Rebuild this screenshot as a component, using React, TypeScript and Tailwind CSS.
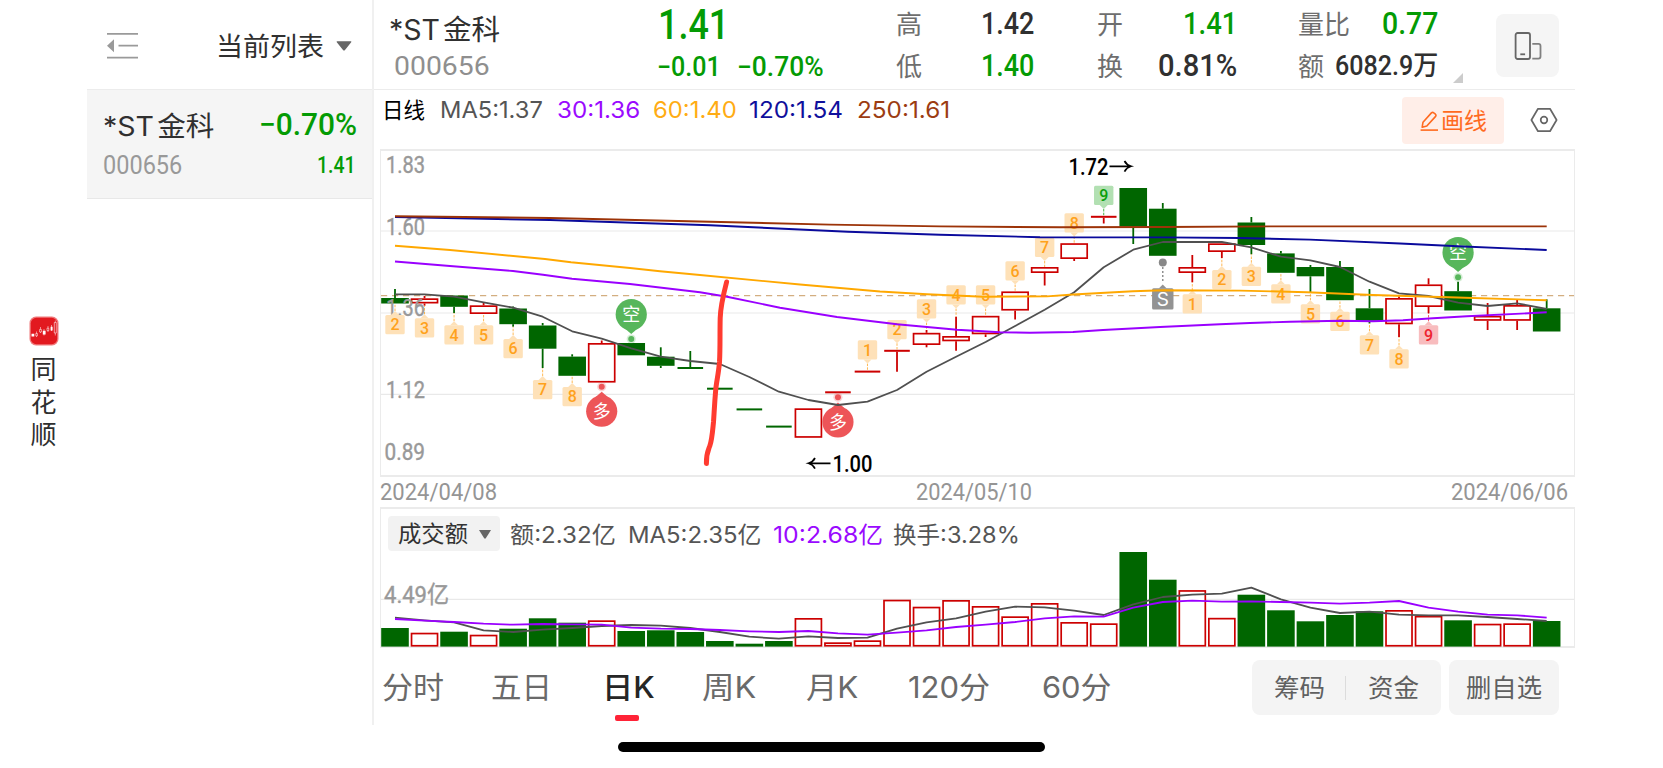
import { useLayoutEffect, useRef, useState } from "react";
import type { ReactNode } from "react";

type Point = [number, number];

const NUM = "font-['Roboto','Noto_Sans_CJK_SC',sans-serif]";
const UI = "font-['Inter','Noto_Sans_CJK_SC',sans-serif]";

/* Text condensed or widened to fill the width given by its class. */
function Fit({ className, children }: { className: string; children: ReactNode }) {
  const box = useRef<HTMLSpanElement>(null);
  const inner = useRef<HTMLSpanElement>(null);
  const [scale, setScale] = useState(1);
  useLayoutEffect(() => {
    if (box.current && inner.current && inner.current.offsetWidth > 0) {
      setScale(box.current.clientWidth / inner.current.offsetWidth);
    }
  }, []);
  return (
    <span ref={box} className={`block shrink-0 whitespace-nowrap ${className}`}>
      <span ref={inner} className="inline-block origin-left" style={{ transform: `scaleX(${scale})` }}>
        {children}
      </span>
    </span>
  );
}

const X0 = 395;
const PITCH = 29.53;
const xAt = (i: number) => X0 + i * PITCH;

// colour, body top, body bottom, wick top, wick bottom
type Candle = ["g" | "r", number, number, number, number];
const candles: Candle[] = [
  ["g", 298, 303.5, 289, 303.5],
  ["r", 298.3, 303.5, 296, 305.7],
  ["g", 295.5, 306.8, 295.5, 313],
  ["r", 305.3, 314, 302.5, 314],
  ["g", 308.5, 324.2, 306.5, 326.7],
  ["g", 325.5, 348.7, 323, 368],
  ["g", 356.6, 375.8, 354.3, 375.8],
  ["r", 343, 382.6, 340.5, 382],
  ["g", 343, 355.3, 343, 355],
  ["g", 356.7, 365.8, 347.3, 368],
  ["g", 367, 369, 351, 368],
  ["g", 387.7, 389.7, 388, 389],
  ["g", 408.4, 410.4, 409, 410],
  ["g", 425.6, 427.6, 426, 427],
  ["r", 408.3, 437.8, 409, 437],
  ["r", 391.3, 393.3, 392, 393],
  ["r", 370.6, 372.6, 371, 372],
  ["r", 349.8, 351.8, 351, 371.7],
  ["r", 332.8, 345, 330, 347.3],
  ["r", 336, 341.3, 316.7, 350.7],
  ["r", 315.8, 334.3, 316.5, 337],
  ["r", 291.4, 310.6, 292, 319.5],
  ["r", 267, 273, 268, 285.5],
  ["r", 243.2, 259, 244, 261],
  ["r", 215.8, 217.8, 216, 223.5],
  ["g", 188, 226.5, 188, 244],
  ["g", 208.7, 255.8, 203, 255],
  ["r", 267, 273, 255, 282.3],
  ["r", 243.3, 252, 244, 258],
  ["g", 222.5, 245, 217, 254.3],
  ["g", 253.4, 272.8, 251, 272],
  ["g", 267, 276.3, 265, 292],
  ["g", 267, 300.2, 261, 300],
  ["g", 308.3, 320.8, 289, 323.5],
  ["r", 298, 324.3, 296.5, 337],
  ["r", 284.4, 307, 278.3, 313.3],
  ["g", 291.2, 310.5, 281.7, 310],
  ["r", 315.8, 320.8, 303, 330],
  ["r", 305, 320.8, 300, 330],
  ["g", 308.3, 331.5, 299.3, 331],
];

const volumeTops = [
  628, 632.7, 631.7, 634.7, 628.7, 618.3, 622.7, 620.3, 631, 630.3, 632, 641, 643.7, 641, 618, 642.3, 640.3, 599.7,
  606.7, 600, 606, 616.3, 603, 622, 623.3, 552, 579.7, 590.1, 617.8, 594.7, 610.3, 621.3, 615, 611.3, 610, 615.8,
  620.3, 623.7, 623.3, 621,
];
const volumeMa5 = [
  617.7, 620.3, 622.3, 630.3, 632, 629.7, 628, 626, 625, 625.7, 628, 632, 636.7, 638.7, 636.3, 638, 637.7, 628.7,
  622.3, 618.3, 611.7, 606.7, 607.3, 610.7, 615, 604.3, 597, 594.7, 593.7, 587.7, 599.3, 607.7, 613, 611.7, 614.7,
  615.3, 615.3, 617, 619, 621,
];
const volumeMa10 = [
  619, 620.7, 622, 623.7, 624.7, 624, 624.3, 624.7, 627.7, 628.7, 629, 630, 631.3, 632, 631, 633.3, 634.7, 632.7,
  630.3, 627, 624.7, 622, 618.3, 616.3, 616.7, 607.7, 602, 600.7, 601.7, 601.3, 602, 602.7, 603.7, 602.7, 601, 607.7,
  611.7, 614.7, 615.3, 617.7,
];
const ma5 = [
  294.3, 294.3, 296.7, 302.3, 307.7, 316.7, 331.3, 338.7, 348.3, 356.7, 361, 364, 377, 391.7, 400, 405, 401.7, 390,
  371.7, 356.7, 342, 326, 309.7, 292.3, 267.3, 249.7, 242, 242, 242, 247.3, 256.7, 260.3, 267, 281.7, 293.3, 296,
  302.7, 306, 303.3, 309,
];
const ma30: Point[] = [
  [395, 261.5], [453, 266.2], [513, 271], [543, 274.7], [572, 278.7], [630, 284], [700, 292.3], [727, 296.7],
  [780, 307.7], [837, 317], [897, 324.3], [957, 329.7], [1000, 332.3], [1030, 332.7], [1073, 332], [1103, 330],
  [1160, 327], [1220, 324.3], [1250, 323], [1290, 321.7], [1340, 320.7], [1373, 321.2], [1403, 320.3],
  [1433, 318.3], [1467, 316.3], [1546.7, 312.3],
];
const ma60: Point[] = [
  [395, 245.8], [450, 250], [545, 259], [571, 262.3], [630, 268], [660, 271.2], [700, 275], [800, 284.5],
  [880, 291.5], [927, 294.3], [983, 296.7], [1047, 296.4], [1073, 294.5], [1133, 291.2], [1163, 290.2],
  [1240, 290.6], [1307, 292.2], [1373, 295], [1457, 297.5], [1546.7, 300.3],
];
const ma120: Point[] = [
  [395, 217], [550, 220], [640, 223], [710, 225.3], [848, 231.7], [940, 234.8], [1040, 237.2], [1163, 237.4],
  [1240, 238], [1310, 239.6], [1400, 243.5], [1458, 246.2], [1546.7, 250],
];
const ma250: Point[] = [
  [395, 216.3], [550, 218], [710, 221.7], [830, 224.6], [940, 226.4], [1060, 227.3], [1163, 227], [1270, 226.4],
  [1546.7, 226.4],
];

// candle index, digit, top of the box, side of the pointer, tone
type Badge = [number, string, number, "up" | "down", "o" | "g" | "r"];
const badges: Badge[] = [
  [0, "2", 315, "up", "o"], [1, "3", 318.3, "up", "o"], [2, "4", 325.2, "up", "o"], [3, "5", 325.2, "up", "o"],
  [4, "6", 339, "up", "o"], [5, "7", 380, "up", "o"], [6, "8", 387, "up", "o"],
  [16, "1", 340.3, "down", "o"], [17, "2", 320, "down", "o"], [18, "3", 299.3, "down", "o"],
  [19, "4", 285.3, "down", "o"], [20, "5", 285.3, "down", "o"], [21, "6", 261.3, "down", "o"],
  [22, "7", 237.7, "down", "o"], [23, "8", 213.2, "down", "o"], [24, "9", 185.7, "down", "g"],
  [27, "1", 294.3, "up", "o"], [28, "2", 270, "up", "o"], [29, "3", 266.7, "up", "o"], [30, "4", 284.3, "up", "o"],
  [31, "5", 304.3, "up", "o"], [32, "6", 311.7, "up", "o"], [33, "7", 335.3, "up", "o"], [34, "8", 349.3, "up", "o"],
  [35, "9", 325.3, "up", "r"],
];
const badgeFill = { o: "#fee1b8", g: "#b2e0b2", r: "#f8bcbe" };
const badgeText = { o: "#ffa21c", g: "#0a9f0a", r: "#ee2530" };

const toLine = (pts: Point[]) => pts.map((p) => p.join(",")).join(" ");
const series = (ys: number[]) => toLine(ys.map((y, i): Point => [xAt(i), y]));

function Bars() {
  return (
    <g>
      {candles.map(([tone, top, bottom, high, low], i) => {
        const x = xAt(i);
        const color = tone === "g" ? "#006600" : "#cc0000";
        const flat = bottom - top < 2.5;
        return (
          <g key={i}>
            {high < top && <line x1={x} x2={x} y1={high} y2={top} stroke={color} strokeWidth="1.8" />}
            {low > bottom && <line x1={x} x2={x} y1={bottom} y2={low} stroke={color} strokeWidth="1.8" />}
            {flat && <rect x={x - 12.8} y={top} width="25.6" height="2" fill={color} />}
            {!flat && tone === "g" && <rect x={x - 13.8} y={top} width="27.6" height={bottom - top} fill={color} />}
            {!flat && tone === "r" && (
              <rect x={x - 13} y={top + 0.85} width="26" height={bottom - top - 1.7} fill="#fff" stroke={color} strokeWidth="1.7" />
            )}
          </g>
        );
      })}
    </g>
  );
}

function BadgeMark({ badge }: { badge: Badge }) {
  const [i, digit, top, side, tone] = badge;
  const x = xAt(i);
  const c = candles[i];
  const tip = side === "up" ? top - 4 : top + 23.3;
  const base = side === "up" ? top : top + 19.3;
  const end = side === "up" ? Math.max(c[2], c[4]) : Math.min(c[1], c[3]);
  return (
    <g>
      <line x1={x} x2={x} y1={tip} y2={end} stroke={badgeText[tone]} strokeWidth="1" strokeDasharray="2.5 1.2" opacity="0.75" />
      <rect x={x - 9.7} y={top} width="19.4" height="19.3" rx="1.5" fill={badgeFill[tone]} />
      <path d={`M${x - 4} ${base}L${x} ${tip}L${x + 4} ${base}Z`} fill={badgeFill[tone]} />
      <text x={x} y={top + 15.4} textAnchor="middle" fontSize="16" fontWeight="500" fontFamily="Roboto, sans-serif" fill={badgeText[tone]}>
        {digit}
      </text>
    </g>
  );
}

function Pin({ i, cy, dot, label, color }: { i: number; cy: number; dot: number; label: string; color: string }) {
  const x = xAt(i);
  const dir = dot > cy ? 1 : -1;
  return (
    <g>
      <circle cx={x} cy={dot} r="4.6" fill={color} opacity="0.25" />
      <circle cx={x} cy={dot} r="3" fill={color} />
      <path d={`M${x - 7} ${cy + dir * 13.5}L${x} ${cy + dir * 19.5}L${x + 7} ${cy + dir * 13.5}Z`} fill={color} />
      <circle cx={x} cy={cy} r="15.6" fill={color} />
      <text x={x} y={cy + 6.6} textAnchor="middle" fontSize="18" fill="#fff" fontFamily="'Noto Sans CJK SC', sans-serif">
        {label}
      </text>
    </g>
  );
}

function AxisLabel({ x, y, w, children }: { x: number; y: number; w: number; children: string }) {
  return (
    <text
      x={x}
      y={y}
      textLength={w}
      lengthAdjust="spacingAndGlyphs"
      fontSize="23.5"
      fill="#999"
      stroke="#999"
      strokeWidth="0.4"
      fontFamily="Roboto, 'Noto Sans CJK SC', sans-serif"
    >
      {children}
    </text>
  );
}

function PriceChart() {
  return (
    <svg viewBox="381 151 1193 324" className="block h-[324px] w-[1193px] overflow-visible">
      <g stroke="#e9e9e9" strokeWidth="1.2">
        <line x1="381" x2="1574" y1="231" y2="231" />
        <line x1="381" x2="1574" y1="313" y2="313" />
        <line x1="381" x2="1574" y1="394.4" y2="394.4" />
      </g>
      <line x1="381" x2="1574" y1="295.6" y2="295.6" stroke="#d3ae80" strokeWidth="1.4" strokeDasharray="6.2 4.8" />
      <Bars />
      <AxisLabel x={386} y={173} w={39}>1.83</AxisLabel>
      <AxisLabel x={386} y={234.7} w={39}>1.60</AxisLabel>
      <AxisLabel x={386} y={316.3} w={39}>1.36</AxisLabel>
      <AxisLabel x={386} y={398} w={39}>1.12</AxisLabel>
      <AxisLabel x={384.5} y={460} w={40.5}>0.89</AxisLabel>
      {badges.map((b) => (
        <BadgeMark key={b[0]} badge={b} />
      ))}
      <Pin i={8} cy={314.6} dot={339} label="空" color="#57b65b" />
      <Pin i={36} cy={252.6} dot={277.2} label="空" color="#57b65b" />
      <Pin i={7} cy={411.2} dot={386.8} label="多" color="#ed5558" />
      <Pin i={15} cy={422} dot={397.2} label="多" color="#ed5558" />
      <g>
        <circle cx={xAt(26)} cy="262.6" r="4" fill="#888" />
        <line x1={xAt(26)} x2={xAt(26)} y1="267" y2="283" stroke="#888" strokeWidth="1.4" strokeDasharray="2 2" />
        <rect x={xAt(26) - 10.7} y="288.3" width="21.4" height="21.2" rx="1.5" fill="#939393" />
        <path d={`M${xAt(26) - 4} 288.5L${xAt(26)} 284.5L${xAt(26) + 4} 288.5Z`} fill="#939393" />
        <text x={xAt(26)} y="306" textAnchor="middle" fontSize="19" fill="#fff" fontFamily="Inter, sans-serif">
          S
        </text>
      </g>
      <g fill="none" strokeWidth="1.9" strokeLinejoin="round">
        <polyline points={series(ma5)} stroke="#505050" strokeWidth="1.8" />
        <polyline points={toLine(ma30)} stroke="#9a00ff" />
        <polyline points={toLine(ma60)} stroke="#ffa800" />
        <polyline points={toLine(ma120)} stroke="#0a0a9c" />
        <polyline points={toLine(ma250)} stroke="#9c3308" />
      </g>
      <g fontFamily="Roboto, sans-serif" fontSize="23.5" fontWeight="500" fill="#000">
        <text x="1068.5" y="175" textLength="40" lengthAdjust="spacingAndGlyphs">1.72</text>
        <text x="832.5" y="471.7" textLength="40" lengthAdjust="spacingAndGlyphs">1.00</text>
      </g>
      <g fill="none" stroke="#000" strokeWidth="1.7">
        <path d="M1109.5 166.3H1130.5M1124.5 161Q1126.5 165 1131 166.3Q1126.5 167.6 1124.5 171.6" />
        <path d="M830.5 463.3H809.5M815 458Q813 462 808.5 463.3Q813 464.6 815 468.6" />
      </g>
      <path
        d="M726.6 282C723 296 720.5 306 720.2 318C719.8 334 720.3 348 719.5 362C718.5 374 716.4 382 715.7 390C714.5 404 714.2 412 713.5 422C712.5 432 712 440 709.8 446C707.5 452 706.2 454 706.4 463.5"
        fill="none"
        stroke="#ff3b30"
        strokeWidth="5"
        strokeLinecap="round"
        strokeLinejoin="round"
      />
    </svg>
  );
}

function VolumeChart() {
  return (
    <svg viewBox="381 552 1193 93" className="block h-[93px] w-[1193px] overflow-visible">
      <line x1="381" x2="1574" y1="599.4" y2="599.4" stroke="#e9e9e9" strokeWidth="1.2" />
      <AxisLabel x={384} y={603} w={65}>4.49亿</AxisLabel>
      {volumeTops.map((top, i) =>
        candles[i][0] === "g" ? (
          <rect key={i} x={xAt(i) - 13.8} y={top} width="27.6" height={646.6 - top} fill="#006600" />
        ) : (
          <rect key={i} x={xAt(i) - 13} y={top + 0.85} width="26" height={644.9 - top} fill="#fff" stroke="#cc0000" strokeWidth="1.7" />
        ),
      )}
      <g fill="none" strokeWidth="1.8" strokeLinejoin="round">
        <polyline points={series(volumeMa5)} stroke="#505050" />
        <polyline points={series(volumeMa10)} stroke="#9a00ff" />
      </g>
    </svg>
  );
}

function AppLogo() {
  return (
    <svg viewBox="0 0 30 30" className="block size-[30px]">
      <rect x="0.5" y="0.5" width="29" height="29" rx="6.5" fill="#f07a7c" />
      <rect x="1.8" y="1.8" width="26.4" height="26.4" rx="5.5" fill="#e2191f" />
      <path d="M7.5 15.5V21M11.5 11V17M15 13V19.5M19 10V16M22.5 9V15M26.3 4.5V19.5" stroke="#fff" strokeWidth="0.5" />
      <path d="M2.5 17.8h2.8v2.8h-2.8zM13.8 14.8h2.8v3.7h-2.8zM21.6 10.8h2v3.7h-2z" fill="#fff" />
      <path d="M6.8 17.5h1.6v2.4h-1.6zM10.6 13.4h1.8v2.6h-1.8zM18 12.2h1.8v2.4h-1.8zM25.3 6.5h2v10.5h-2z" fill="#e2191f" stroke="#fff" strokeWidth="0.55" />
    </svg>
  );
}

function Rail() {
  return (
    <div className="flex w-[87px] flex-col items-center pt-[316px]">
      <AppLogo />
      <div className={`${UI} mt-[8px] flex flex-col items-center text-[26px] leading-[32.7px] text-[#2f2f2f]`}>
        <span>同</span>
        <span>花</span>
        <span>顺</span>
      </div>
    </div>
  );
}

function StockName() {
  return (
    <>
      *ST<span className="ml-[3px]">金科</span>
    </>
  );
}

function Sidebar() {
  return (
    <aside className="h-[725px] w-[287px] border-r-2 border-[#f0f0f0]">
      <div className="flex h-[90px] items-center border-b border-[#ececec] pt-[2px] pl-5">
        <svg viewBox="0 0 31 28" className="block h-[28px] w-[31px]" fill="#9a9a9a">
          <path d="M0 1h31v1.8H0zM11.5 12.8H31v1.8H11.5zM0 24.8h31v1.8H0zM0 13.7L7 7.2v13z" />
        </svg>
        <Fit className={`${UI} mt-px ml-[78px] w-[108px] text-[26.5px] leading-[36px] text-[#303030]`}>当前列表</Fit>
        <svg viewBox="0 0 16 10" className="mt-px ml-[12px] block h-[10px] w-[16px]" fill="#666">
          <path d="M1.2 0.3h13.6q1 0 .4 1L9 9q-1 1-2 0L.8 1.3q-.6-1 .4-1z" />
        </svg>
      </div>
      <div className="h-[109px] border-b border-[#e8e8e8] bg-[#f5f5f5] pt-[17px] pr-[15px] pl-[16px]">
        <div className="flex h-[38px] justify-between">
          <Fit className={`${UI} mt-px w-[111px] text-[27px] leading-[38px] text-[#303030]`}>
            <StockName />
          </Fit>
          <Fit className={`${NUM} w-[98px] text-[30.5px] font-medium leading-[36px] text-[#049b04]`}>−0.70%</Fit>
        </div>
        <div className="mt-[3px] flex h-[34px] justify-between pr-px">
          <Fit className={`${NUM} w-[79px] text-[25px] leading-[35px] text-[#999]`}>000656</Fit>
          <Fit className={`${NUM} w-[39px] text-[24px] font-medium leading-[35px] text-[#049b04]`}>1.41</Fit>
        </div>
      </div>
    </aside>
  );
}

function Stat({ label, labelWidth, value, valueClass }: { label: string; labelWidth: string; value: string; valueClass: string }) {
  return (
    <div className="flex h-[42px] justify-between">
      <Fit className={`${UI} mt-[2px] text-[26px] leading-[42px] text-[#6e6e6e] ${labelWidth}`}>{label}</Fit>
      <Fit className={`${NUM} font-medium leading-[43px] ${valueClass}`}>{value}</Fit>
    </div>
  );
}

function QuoteHeader() {
  return (
    <header className="flex h-[90px] border-b border-[#ececec] pl-[15px]">
      <div className="w-[268px] pt-[12px]">
        <Fit className={`${UI} w-[111px] text-[28px] leading-[36px] text-[#303030]`}>
          <StockName />
        </Fit>
        <Fit className={`${NUM} mt-px ml-[5px] w-[96px] text-[26px] leading-[34px] text-[#8f8f8f]`}>000656</Fit>
      </div>
      <div className="w-[239px] text-[#049b04]">
        <Fit className={`${NUM} ml-px w-[71px] text-[42.5px] font-medium leading-[50px]`}>1.41</Fit>
        <div className="flex gap-[16px]">
          <Fit className={`${NUM} w-[64px] text-[27px] font-medium leading-[34px]`}>−0.01</Fit>
          <Fit className={`${NUM} w-[87px] text-[27px] font-medium leading-[34px]`}>−0.70%</Fit>
        </div>
      </div>
      <div className="w-[138px] pt-[2px]">
        <Stat label="高" labelWidth="w-[26px]" value="1.42" valueClass="w-[53px] text-[31px] text-[#303030]" />
        <Stat label="低" labelWidth="w-[26px]" value="1.40" valueClass="w-[53px] text-[31px] text-[#049b04]" />
      </div>
      <div className="ml-[63px] w-[140px] pt-[2px]">
        <Stat label="开" labelWidth="w-[26px]" value="1.41" valueClass="w-[54px] text-[31px] text-[#049b04]" />
        <Stat label="换" labelWidth="w-[26px]" value="0.81%" valueClass="w-[79px] text-[31px] text-[#303030]" />
      </div>
      <div className="ml-[61px] w-[140px] pt-[2px]">
        <Stat label="量比" labelWidth="w-[52px]" value="0.77" valueClass="w-[56px] text-[31px] text-[#049b04]" />
        <Stat label="额" labelWidth="w-[26px]" value="6082.9万" valueClass="w-[103px] text-[27.5px] text-[#303030]" />
      </div>
      <svg viewBox="0 0 10 10" className="mt-[73px] ml-[15px] block size-[10px]" fill="#ccc">
        <path d="M10 0V10H0z" />
      </svg>
      <div className="mt-[14px] ml-[33px] flex h-[63px] w-[63px] items-center justify-center rounded-[8px] bg-[#f5f5f5]">
        <svg viewBox="0 0 28 30" className="block h-[30px] w-[28px]" fill="none" stroke="#666" strokeWidth="1.8">
          <rect x="1.6" y="2" width="14.4" height="26" rx="2" />
          <path d="M6.3 23.3h4.8" />
          <path d="M18.3 12.9H24.5q2 0 2 2V25.6q0 2-2 2H18.3" stroke="#808080" />
        </svg>
      </div>
    </header>
  );
}

function AverageRow() {
  return (
    <div className="flex h-[59px] pl-[8px]">
      <Fit className={`${UI} mt-[6px] w-[43px] text-[22px] leading-[28px] text-black`}>日线</Fit>
      <Fit className={`${UI} mt-[6px] ml-[15px] w-[103px] text-[23px] leading-[29px] text-[#555]`}>MA5:1.37</Fit>
      <Fit className={`${UI} mt-[6px] ml-[14px] w-[83px] text-[23px] leading-[29px] text-[#9a0aff]`}>30:1.36</Fit>
      <Fit className={`${UI} mt-[6px] ml-[13px] w-[84px] text-[23px] leading-[29px] text-[#ffac14]`}>60:1.40</Fit>
      <Fit className={`${UI} mt-[6px] ml-[12px] w-[94px] text-[23px] leading-[29px] text-[#10109c]`}>120:1.54</Fit>
      <Fit className={`${UI} mt-[6px] ml-[14px] w-[93px] text-[23px] leading-[29px] text-[#9c3c12]`}>250:1.61</Fit>
      <button className="mt-[7px] ml-auto flex h-[47px] w-[102px] items-center rounded-[4px] bg-[#ffeee8] pl-[18px]">
        <svg viewBox="0 0 19 20" className="block h-[20px] w-[19px]" fill="none" stroke="#ff6a1f" strokeWidth="1.6" strokeLinejoin="round">
          <path d="M0.6 19.1H18" />
          <path d="M2.2 16.2L3 11.2L11.4 1.9Q12.6 .8 13.8 1.9L15.4 3.2Q16.5 4.4 15.4 5.6L6.8 15Z" />
        </svg>
        <Fit className={`${UI} ml-[2px] w-[46px] text-left text-[23px] leading-[30px] text-[#ff6a1f]`}>画线</Fit>
      </button>
      <svg viewBox="0 0 28 26" className="mt-[17px] mr-[17px] ml-[26px] block h-[26px] w-[28px]" fill="none" stroke="#666" strokeWidth="1.7" strokeLinejoin="round">
        <path d="M8 1.8H20L26.6 13L20 24.2H8L1.4 13Z" />
        <circle cx="14" cy="13" r="3.3" />
      </svg>
    </div>
  );
}

function VolumePanel() {
  return (
    <section className="ml-[6px] h-[141px] w-[1195px] border-x border-y-2 border-[#ebebeb]">
      <div className="flex h-[43px] pt-[7px] pl-[7px]">
        <div className="flex h-[35px] w-[112px] items-center rounded-[4px] bg-[#f2f2f2] pt-px pl-[10px]">
          <Fit className={`${UI} w-[70px] text-[23px] leading-[30px] text-[#333]`}>成交额</Fit>
          <svg viewBox="0 0 12 9" className="ml-[11px] block h-[9px] w-[12px]" fill="#666">
            <path d="M0 0H12L6.8 8.3q-.8.8-1.6 0z" />
          </svg>
        </div>
        <Fit className={`${UI} ml-[10px] w-[106px] text-[23px] leading-[38px] text-[#555]`}>额:2.32亿</Fit>
        <Fit className={`${UI} ml-[12px] w-[133px] text-[23px] leading-[38px] text-[#555]`}>MA5:2.35亿</Fit>
        <Fit className={`${UI} ml-[12px] w-[110px] text-[23px] leading-[38px] text-[#9a0aff]`}>10:2.68亿</Fit>
        <Fit className={`${UI} ml-[10px] w-[127px] text-[23px] leading-[38px] text-[#555]`}>换手:3.28%</Fit>
      </div>
      <VolumeChart />
    </section>
  );
}

function Tabs() {
  const tab = `${UI} mt-[18px] text-[29.5px] leading-[43px]`;
  return (
    <nav className="flex h-[90px] pl-[8px] text-[#6a6a6a]">
      <Fit className={`${tab} w-[62px]`}>分时</Fit>
      <Fit className={`${tab} ml-[47px] w-[61px]`}>五日</Fit>
      <div className="ml-[50px] flex w-[54px] flex-col">
        <Fit className={`${tab} w-[53px] font-medium text-[#262626]`}>日K</Fit>
        <span className="mt-[6px] ml-[13px] h-[6px] w-[24px] rounded-[2px] bg-[#ff2337]" />
      </div>
      <Fit className={`${tab} ml-[46px] w-[54px]`}>周K</Fit>
      <Fit className={`${tab} ml-[50px] w-[52px]`}>月K</Fit>
      <Fit className={`${tab} ml-[50px] w-[82px]`}>120分</Fit>
      <Fit className={`${tab} ml-[52px] w-[69px]`}>60分</Fit>
      <div className={`${UI} mt-[12px] mr-[16px] ml-auto flex h-[55px] gap-[8px] text-[25px] leading-[36px] text-[#606060]`}>
        <div className="flex w-[189px] items-center rounded-[8px] bg-[#f4f4f4] pl-[22px]">
          <Fit className="w-[51px]">筹码</Fit>
          <span className="ml-[20px] h-[24px] w-px bg-[#dcdcdc]" />
          <Fit className="ml-[22px] w-[51px]">资金</Fit>
        </div>
        <div className="flex w-[110px] items-center rounded-[8px] bg-[#f4f4f4] pl-[17px]">
          <Fit className="w-[76px]">删自选</Fit>
        </div>
      </div>
    </nav>
  );
}

export default function App() {
  return (
    <div className="relative flex h-[768px] w-[1663px] overflow-hidden bg-white">
      <Rail />
      <Sidebar />
      <main className="flex w-[1201px] flex-col">
        <QuoteHeader />
        <AverageRow />
        <section className="ml-[6px] h-[328px] w-[1195px] border-x border-y-2 border-[#ebebeb]">
          <PriceChart />
        </section>
        <div className={`${NUM} flex h-[30px] justify-between pr-[7px] pl-[6px] text-[23.5px] leading-[30px] text-[#959595]`}>
          <Fit className="w-[117px]">2024/04/08</Fit>
          <Fit className="w-[116px]">2024/05/10</Fit>
          <Fit className="w-[117px]">2024/06/06</Fit>
        </div>
        <VolumePanel />
        <Tabs />
      </main>
      <div className="absolute top-[742px] left-[618px] h-[10px] w-[427px] rounded-full bg-black" />
    </div>
  );
}
